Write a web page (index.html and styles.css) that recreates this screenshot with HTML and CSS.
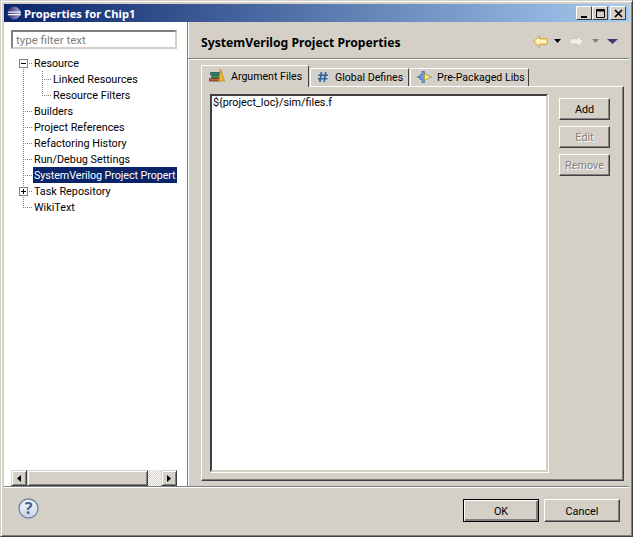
FILE: index.html
```html
<!DOCTYPE html>
<html>

<head>
    <meta charset="utf-8">
    <title>Properties for Chip1</title>
    <link rel="stylesheet" href="styles.css">
</head>

<body>
    <div class="window">
        <div class="titlebar">
            <svg class="app-icon" width="14" height="14" viewBox="0 0 14 14">
                <defs>
                    <linearGradient id="sphere" x1="0" y1="0" x2="1" y2="0">
                        <stop offset="0" stop-color="#2a2a6a" />
                        <stop offset="1" stop-color="#a8a0d0" />
                    </linearGradient>
                </defs>
                <circle cx="7" cy="7" r="6.5" fill="url(#sphere)" />
                <path d="M1 5.5h13v1.2H1zM0.8 8h13.2v1.2H0.8z" fill="#f0f0fa" />
            </svg>
            <span class="title-text">Properties for Chip1</span>
            <div class="caption-btns">
                <div class="caption-btn">
                    <svg width="9" height="9" viewBox="0 0 9 9"><path d="M1 7h6v2H1z" fill="#000" /></svg>
                </div>
                <div class="caption-btn">
                    <svg width="9" height="9" viewBox="0 0 9 9"><path d="M0.5 1.5h8v7h-8zM0.5 0.5h8v1.5h-8z" fill="none" stroke="#000" /></svg>
                </div>
                <div class="caption-btn close">
                    <svg width="9" height="9" viewBox="0 0 9 9"><path d="M1 1l7 7M8 1l-7 7" stroke="#000" stroke-width="1.6" /></svg>
                </div>
            </div>
        </div>

        <div class="main">
            <div class="sidebar">
                <input class="filter" type="text" placeholder="type filter text">
                <div class="tree">
                    <div class="row">
                        <span class="twig start">
                            <svg class="expander" width="9" height="9" viewBox="0 0 9 9">
                                <rect x="0.5" y="0.5" width="8" height="8" fill="#fff" stroke="#808080" />
                                <path d="M2 4.5h5" stroke="#000" />
                            </svg>
                        </span>
                        <span class="label">Resource</span>
                    </div>
                    <div class="row">
                        <span class="twig pipe"></span><span class="twig tee"></span>
                        <span class="label">Linked Resources</span>
                    </div>
                    <div class="row">
                        <span class="twig pipe"></span><span class="twig end"></span>
                        <span class="label">Resource Filters</span>
                    </div>
                    <div class="row"><span class="twig tee"></span><span class="label">Builders</span></div>
                    <div class="row"><span class="twig tee"></span><span class="label">Project References</span></div>
                    <div class="row"><span class="twig tee"></span><span class="label">Refactoring History</span></div>
                    <div class="row"><span class="twig tee"></span><span class="label">Run/Debug Settings</span></div>
                    <div class="row"><span class="twig tee"></span><span class="label selected">SystemVerilog Project Propert</span></div>
                    <div class="row">
                        <span class="twig tee">
                            <svg class="expander" width="9" height="9" viewBox="0 0 9 9">
                                <rect x="0.5" y="0.5" width="8" height="8" fill="#fff" stroke="#808080" />
                                <path d="M2 4.5h5M4.5 2v5" stroke="#000" />
                            </svg>
                        </span>
                        <span class="label">Task Repository</span>
                    </div>
                    <div class="row"><span class="twig end"></span><span class="label">WikiText</span></div>
                </div>
                <div class="hscroll">
                    <div class="scroll-btn"><svg width="4" height="7" viewBox="0 0 4 7"><path d="M4 0v7L0 3.5z" fill="#000" /></svg></div>
                    <div class="scroll-thumb"></div>
                    <div class="scroll-track"></div>
                    <div class="scroll-btn"><svg width="4" height="7" viewBox="0 0 4 7"><path d="M0 0v7l4-3.5z" fill="#000" /></svg></div>
                </div>
            </div>

            <div class="content">
                <div class="page-head">
                    <h1 class="page-title">SystemVerilog Project Properties</h1>
                    <div class="nav-icons">
                        <svg width="15" height="13" viewBox="0 0 15 13">
                            <path d="M0.8 6.5L6.5 0.8v3h7.7v5.4H6.5v3z" fill="#fff2b8" stroke="#d99a1c" />
                        </svg>
                        <svg class="nav-drop" width="7" height="4" viewBox="0 0 7 4"><path d="M0 0h7L3.5 4z" fill="#000" /></svg>
                        <svg class="nav-fwd" width="15" height="13" viewBox="0 0 15 13">
                            <path d="M14.2 6.5L8.5 0.8v3H0.8v5.4h7.7v3z" fill="#f2f0ea" stroke="#c4c2bc" />
                        </svg>
                        <svg class="nav-fwd" width="7" height="4" viewBox="0 0 7 4"><path d="M0 0h7L3.5 4z" fill="#85837e" /></svg>
                        <svg class="nav-fwd" width="11" height="5" viewBox="0 0 11 5"><path d="M0 0h11L5.5 5z" fill="#3f3a70" /></svg>
                    </div>
                </div>

                <div class="tabs">
                    <div class="tab tab-args active">
                        <svg width="16" height="14" viewBox="0 0 16 14">
                            <path d="M1.5 4.5h9v2h-9z" fill="#2f8f7a" stroke="#1d4f55" stroke-width="0.8" />
                            <path d="M2.5 7.5h9v2h-9z" fill="#3a9a5a" stroke="#2a5a3a" stroke-width="0.8" />
                            <path d="M0.5 10.5h11v2.5h-11z" fill="#c2603a" stroke="#6a2f22" stroke-width="0.8" />
                            <path d="M11.5 1L15.5 13H9.8z" fill="#f0b830" stroke="#c08a1a" stroke-width="0.8" />
                        </svg>
                        <span>Argument Files</span>
                    </div>
                    <div class="tab tab-defines">
                        <svg width="12" height="12" viewBox="0 0 12 12">
                            <path d="M4.5 1L2.8 11M8.8 1L7.1 11M1.3 4.2h9.6M0.8 7.8h9.6" stroke="#2e5f9e" stroke-width="1.6" fill="none" />
                        </svg>
                        <span>Global Defines</span>
                    </div>
                    <div class="tab tab-libs">
                        <svg width="15" height="14" viewBox="0 0 15 14">
                            <path d="M0 7h3" stroke="#4a78c0" stroke-width="1.6" />
                            <path d="M3 4.5h2V1.5h2.5v11H5v-3H3z" fill="#6f9ade" stroke="#3a62a8" stroke-width="0.7" />
                            <path d="M7.5 3.5L12.5 6v2l-5 2.5z" fill="#f4e6a0" stroke="#b09a30" stroke-width="0.8" />
                            <path d="M12.5 7H15" stroke="#b09a30" stroke-width="1" />
                        </svg>
                        <span>Pre-Packaged Libs</span>
                    </div>
                </div>

                <div class="tab-body">
                    <div class="arg-list">${project_loc}/sim/files.f</div>
                    <div class="side-btns">
                        <button class="btn side">Add</button>
                        <button class="btn side" disabled>Edit</button>
                        <button class="btn side" disabled>Remove</button>
                    </div>
                </div>
            </div>
        </div>

        <div class="footer">
            <svg class="help" width="21" height="21" viewBox="0 0 21 21">
                <defs>
                    <linearGradient id="helpfill" x1="0" y1="0" x2="0" y2="1">
                        <stop offset="0" stop-color="#f8fafc" />
                        <stop offset="1" stop-color="#c8d2e2" />
                    </linearGradient>
                </defs>
                <circle cx="10.5" cy="10.5" r="9.5" fill="url(#helpfill)" stroke="#6f84a8" stroke-width="1.3" />
                <text x="10.5" y="16" text-anchor="middle" class="help-mark">?</text>
            </svg>
            <div class="footer-btns">
                <button class="btn wide default">OK</button>
                <button class="btn wide">Cancel</button>
            </div>
        </div>
    </div>
</body>

</html>
```

FILE: styles.css
```css
html,
body {
    margin: 0;
    padding: 0;
    background: #d4d0c8;
}

body {
    font-family: Roboto, "Noto Sans", sans-serif;
    font-size: 10.8px;
    color: #000;
}

/* outer frame of the dialog */
.window {
    box-sizing: border-box;
    width: 633px;
    height: 537px;
    padding: 3px;
    display: flex;
    flex-direction: column;
    background: #d4d0c8;
    border: 1px solid;
    border-color: #d4d0c8 #404040 #404040 #d4d0c8;
    box-shadow: inset 1px 1px 0 #fff, inset -1px -1px 0 #808080;
}

.titlebar {
    height: 18px;
    display: flex;
    align-items: center;
    background: linear-gradient(to right, #0a246a, #a6caf0);
    color: #fff;
    font-family: "Noto Sans", sans-serif;
    font-weight: bold;
}

.app-icon {
    margin-left: 3px;
    margin-right: 3px;
}

.title-text {
    font-size: 11.2px;
}

.caption-btns {
    margin-left: auto;
    margin-right: 3px;
    display: flex;
}

.caption-btn {
    box-sizing: border-box;
    width: 16px;
    height: 14px;
    display: flex;
    align-items: center;
    justify-content: center;
    background: #d4d0c8;
    border: 1px solid;
    border-color: #fff #404040 #404040 #fff;
}

.caption-btn.close {
    margin-left: 2px;
}

.main {
    flex: 1;
    display: flex;
    min-height: 0;
    border-bottom: 1px solid #808080;
}

/* left side: filter and tree */
.sidebar {
    width: 183px;
    flex: none;
    box-sizing: border-box;
    background: #fff;
    padding: 8px 10px 0 7px;
    display: flex;
    flex-direction: column;
}

.filter {
    box-sizing: border-box;
    width: 166px;
    height: 19px;
    margin: 0;
    padding: 1px 3px 0;
    font: inherit;
    font-size: 11.5px;
    border: 2px solid;
    border-color: #808080 #d4d0c8 #d4d0c8 #808080;
    outline: none;
}

.filter::placeholder {
    color: #808080;
    opacity: 1;
}

.tree {
    flex: 1;
    padding-top: 6px;
    padding-left: 3px;
    min-height: 0;
    overflow: hidden;
}

.row {
    height: 16px;
    display: flex;
    align-items: center;
    white-space: nowrap;
}

.twig {
    width: 19px;
    height: 16px;
    flex: none;
    background-repeat: no-repeat;
}

.twig.pipe {
    background-image: repeating-linear-gradient(to bottom, #808080 0 1px, transparent 1px 2px);
    background-size: 1px 16px;
    background-position: 9px 0;
}

.twig.tee {
    background-image:
        repeating-linear-gradient(to bottom, #808080 0 1px, transparent 1px 2px),
        repeating-linear-gradient(to right, #808080 0 1px, transparent 1px 2px);
    background-size: 1px 16px, 10px 1px;
    background-position: 9px 0, 9px 8px;
}

.twig.end {
    background-image:
        repeating-linear-gradient(to bottom, #808080 0 1px, transparent 1px 2px),
        repeating-linear-gradient(to right, #808080 0 1px, transparent 1px 2px);
    background-size: 1px 9px, 10px 1px;
    background-position: 9px 0, 9px 8px;
}

.twig.start {
    background-image:
        repeating-linear-gradient(to bottom, #808080 0 1px, transparent 1px 2px),
        repeating-linear-gradient(to right, #808080 0 1px, transparent 1px 2px);
    background-size: 1px 8px, 10px 1px;
    background-position: 9px 8px, 9px 8px;
}

.expander {
    display: block;
    margin: 4px 0 0 5px;
}

.label {
    padding: 1px 1px 0;
    line-height: 15px;
}

.label.selected {
    width: 142px;
    letter-spacing: -0.1px;
    background: #0a246a;
    color: #fff;
}

/* scrollbar under the tree */
.hscroll {
    width: 166px;
    height: 16px;
    display: flex;
}

.scroll-btn,
.scroll-thumb {
    box-sizing: border-box;
    background: #d4d0c8;
    border: 1px solid;
    border-color: #d4d0c8 #404040 #404040 #d4d0c8;
    box-shadow: inset 1px 1px 0 #fff, inset -1px -1px 0 #808080;
}

.scroll-btn {
    width: 16px;
    display: flex;
    align-items: center;
    justify-content: center;
}

.scroll-thumb {
    width: 121px;
}

.scroll-track {
    width: 13px;
    background: repeating-conic-gradient(#d4d0c8 0 25%, #fff 0 50%) 0 0 / 2px 2px;
}

/* right side */
.content {
    flex: 1;
    min-width: 0;
    box-sizing: border-box;
    border-left: 1px solid #808080;
    box-shadow: inset 1px 0 0 #fff;
    display: flex;
    flex-direction: column;
}

.page-head {
    height: 37px;
    box-sizing: border-box;
    padding-left: 13px;
    padding-top: 4px;
    display: flex;
    align-items: center;
    border-bottom: 1px solid #808080;
    box-shadow: 0 1px 0 #fff;
}

.page-title {
    margin: 0;
    font-family: "Noto Sans", sans-serif;
    font-size: 12.2px;
    font-weight: bold;
}

.nav-icons {
    margin-left: auto;
    margin-right: 11px;
    margin-bottom: 2px;
    display: flex;
    align-items: center;
}

.nav-drop {
    margin-left: 6px;
}

.nav-fwd {
    margin-left: 8px;
}

.tabs {
    margin-top: 6px;
    margin-left: 13px;
    display: flex;
    align-items: flex-end;
    height: 21px;
    position: relative;
    z-index: 1;
}

.tab {
    box-sizing: border-box;
    height: 18px;
    margin-right: 1px;
    display: flex;
    align-items: center;
    font-size: 10.6px;
    background: #d4d0c8;
    border: 1px solid;
    border-bottom: none;
    border-color: #fff #404040 transparent #fff;
    border-radius: 2px 2px 0 0;
}

.tab svg {
    margin-top: -2px;
}

.tab-args {
    width: 108px;
    height: 22px;
    margin-bottom: -1px;
    padding-left: 7px;
    padding-bottom: 1px;
    gap: 6px;
}

.tab-defines {
    width: 99px;
    padding-left: 6px;
    gap: 6px;
}

.tab-libs {
    width: 119px;
    padding-left: 6px;
    gap: 5px;
}

.tab-body {
    box-sizing: border-box;
    width: 423px;
    height: 395px;
    margin-left: 13px;
    padding: 7px 12px 8px 8px;
    display: flex;
    gap: 11px;
    border: 1px solid;
    border-color: #fff #404040 #404040 #fff;
    box-shadow: inset -1px -1px 0 #808080;
}

.arg-list {
    box-sizing: border-box;
    width: 338px;
    padding: 0 1px;
    background: #fff;
    border: 2px solid;
    border-color: #404040 #d4d0c8 #d4d0c8 #404040;
    box-shadow: 1px 1px 0 #fff;
}

.side-btns {
    margin-top: 4px;
    display: flex;
    flex-direction: column;
    gap: 6px;
}

.btn {
    box-sizing: border-box;
    margin: 0;
    padding: 1px 0 0;
    font: inherit;
    color: #000;
    background: #d4d0c8;
    border: 1px solid;
    border-color: #fff #404040 #404040 #fff;
    box-shadow: inset -1px -1px 0 #808080;
}

.btn:disabled {
    color: #808080;
    text-shadow: 1px 1px 0 #fff;
}

.btn.side {
    width: 51px;
    height: 22px;
}

.btn.wide {
    width: 76px;
    height: 23px;
}

.btn.default {
    outline: 1px solid #000;
    outline-offset: -1px;
    box-shadow: inset 1px 1px 0 #fff, inset -2px -2px 0 #808080;
}

.footer {
    height: 46px;
    flex: none;
    padding-left: 14px;
    padding-right: 9px;
    display: flex;
    align-items: flex-start;
    box-shadow: inset 0 1px 0 #fff;
}

.help {
    margin-top: 11px;
}

.help-mark {
    font-family: "Noto Sans", sans-serif;
    font-size: 16px;
    font-weight: bold;
    fill: #4a6288;
}

.footer-btns {
    margin-left: auto;
    margin-top: 12px;
    display: flex;
    gap: 5px;
}
```
